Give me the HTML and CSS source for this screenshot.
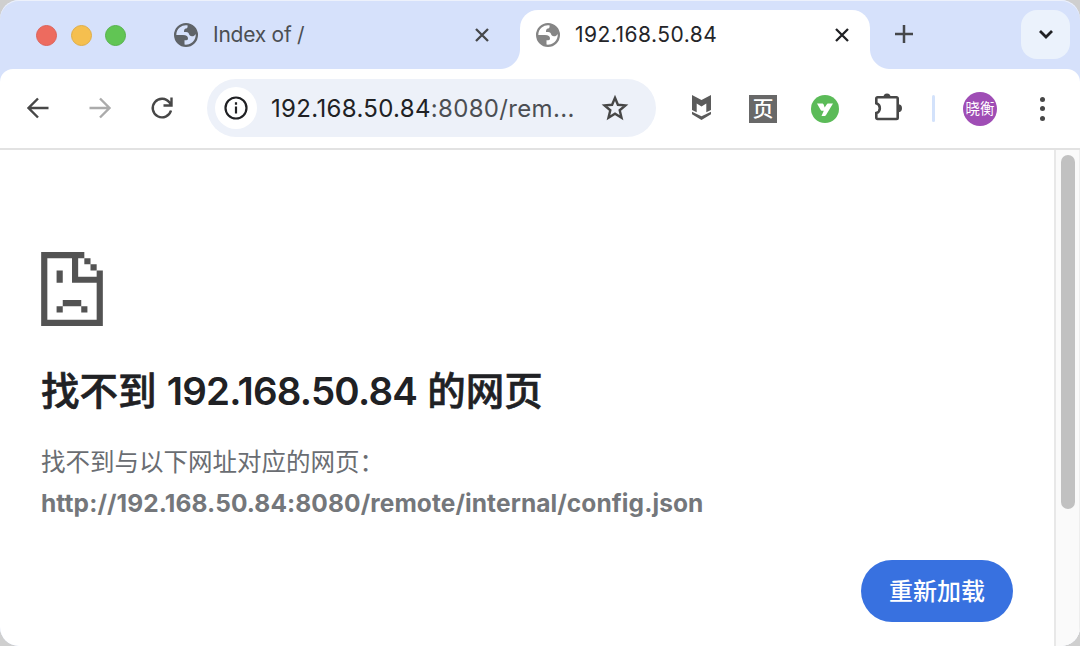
FILE: index.html
```html
<!DOCTYPE html>
<html lang="zh-CN">
<head>
    <meta charset="UTF-8">
    <title>192.168.50.84</title>
    <link rel="stylesheet" href="styles.css">
</head>
<body>
    <div class="window">
        <div class="tab-strip">
            <div class="lights">
                <span class="light red"></span>
                <span class="light yellow"></span>
                <span class="light green"></span>
            </div>
            <div class="tab">
                <svg class="globe" viewBox="0 0 24 24"><path fill="currentColor" fill-rule="evenodd" d="M12 0a12 12 0 1 0 0 24 12 12 0 0 0 0-24zM13.500 2.300A9.800 9.800 0 0 0 2.300 12H9c3.500 0 5 1.300 5 3.500 0 1.500-1 1.800-3.500 1.800v4.300A9.800 9.800 0 0 0 21.700 11c-1 1.700-2 2.300-3.700 2.300-2 0-2.500-1-3.200-2.800-.6-1.300-1.500-1.500-4.800-1.500 0-2.500.5-3.200 2-3.500 1.500-.2 1.800-1 1.500-3.200z"/></svg>
                <span class="tab-title">Index of /</span>
                <svg class="close" viewBox="0 0 14 14"><path d="M1 1l12 12M13 1L1 13"/></svg>
            </div>
            <div class="tab active">
                <svg class="globe" viewBox="0 0 24 24"><path fill="currentColor" fill-rule="evenodd" d="M12 0a12 12 0 1 0 0 24 12 12 0 0 0 0-24zM13.500 2.300A9.800 9.800 0 0 0 2.300 12H9c3.500 0 5 1.300 5 3.500 0 1.500-1 1.800-3.500 1.800v4.300A9.800 9.800 0 0 0 21.700 11c-1 1.700-2 2.300-3.700 2.300-2 0-2.500-1-3.200-2.800-.6-1.300-1.500-1.500-4.800-1.500 0-2.500.5-3.200 2-3.500 1.500-.2 1.800-1 1.500-3.200z"/></svg>
                <span class="tab-title">192.168.50.84</span>
                <svg class="close" viewBox="0 0 14 14"><path d="M1 1l12 12M13 1L1 13"/></svg>
            </div>
            <svg class="new-tab" viewBox="0 0 18 18"><path d="M9 0v18M0 9h18"/></svg>
            <div class="tab-search">
                <svg viewBox="0 0 14 9"><path d="M1 1l6 6 6-6"/></svg>
            </div>
        </div>

        <div class="toolbar">
            <svg class="nav-icon back" viewBox="0 0 22 22"><path d="M21.500 11H2M11 1.500L1.500 11l9.500 9.500"/></svg>
            <svg class="nav-icon forward" viewBox="0 0 22 22"><path d="M0.500 11h19.500M11 1.500l9.500 9.500-9.500 9.500"/></svg>
            <svg class="nav-icon reload" viewBox="0 0 22 22"><path d="M20 13.500A9.300 9.300 0 1 1 18.500 5.500L20 8M20.500 0.500v8H12.500"/></svg>
            <div class="address">
                <div class="site-info">
                    <svg viewBox="0 0 24 24"><circle cx="12" cy="12" r="10.500"/><path d="M12 10.500v7M12 6.200v2.500"/></svg>
                </div>
                <div class="url">192.168.50.84<span>:8080/rem...</span></div>
                <svg class="star" viewBox="0 0 26 26"><path d="M13 2.800l2.900 7 7.500.6-5.700 4.900 1.800 7.400-6.500-4-6.500 4 1.800-7.400-5.700-4.900 7.500-.6z"/></svg>
            </div>
            <div class="extensions">
                <svg class="shield" viewBox="0 0 19 25"><path d="M0 0l9.500 5L19 0v15l-4.700 2.200V8.500l-4.800 3-4.800-3v8.700L0 15z"/><path d="M0 16.800l9.500 4.400 9.500-4.400v2.400L9.500 25 0 19.200z"/></svg>
                <div class="page-ext">页</div>
                <svg class="green-ext" viewBox="0 0 28 28"><circle cx="14" cy="14" r="14" fill="#5bbb58"/><path fill="#fff" d="M6 8.500h5c1 0 1.500.5 1.800 1.500l.9 2.500 1.800-2.800c.5-.8 1-1.200 2-1.200H22l-6.800 11.300c-.5.800-1 1.200-2 1.200h-2.700l2.300-5.200h-1.500c-1 0-1.500-.3-1.900-1.200z"/></svg>
                <svg class="puzzle" viewBox="0 0 28 28"><path class="body" d="M3.500 4.300h19a1.200 1.200 0 0 1 1.200 1.200v19.300a1.200 1.200 0 0 1-1.200 1.200h-19a1.200 1.200 0 0 1-1.200-1.200V20C7 18.500 7 11.800 2.300 10.300V5.500a1.200 1.200 0 0 1 1.200-1.200z"/><path class="knob" d="M9.500 4a3.500 3.500 0 0 1 7 0zM24 11.200a4 4 0 0 1 0 8z"/></svg>
            </div>
            <span class="divider"></span>
            <div class="avatar">晓衡</div>
            <div class="menu"><i></i><i></i><i></i></div>
        </div>

        <div class="page">
            <div class="content">
                <svg class="sad-page" viewBox="0 0 10 12"><path d="M0 0h7v1H6v3h3V3h1v9H0zM1 1v10h8V5H5V1z"/><path d="M7 1h1v1h1v1H8V2H7zM2.500 3h1v2h-1zM3.500 7.800h3v1h-3zM2.500 8.800h1v1h-1zM6.500 8.800h1v1h-1z"/></svg>
                <h1>找不到 <span>192.168.50.84</span> 的网页</h1>
                <p class="summary">找不到与以下网址对应的网页：</p>
                <p class="failed-url">http://192.168.50.84:8080/remote/internal/config.json</p>
                <button class="reload-btn">重新加载</button>
            </div>
            <div class="scrollbar">
                <div class="thumb"></div>
            </div>
        </div>
    </div>
</body>
</html>
```
FILE: styles.css
```css
* {
    box-sizing: border-box;
}
body {
    margin: 0;
    background: #cfcfcf;
    font-family: Inter, 'Noto Sans CJK SC', sans-serif;
}
svg {
    display: block;
    flex: none;
    overflow: visible;
}
.window {
    width: 1080px;
    height: 646px;
    display: flex;
    flex-direction: column;
    overflow: hidden;
    border-radius: 19px;
    background: #d6e1fb;
    box-shadow: inset 0 1px 0 #edf1fb;
}

/* tab strip */
.tab-strip {
    height: 69px;
    display: flex;
    align-items: flex-start;
    padding-top: 10px;
}
.lights {
    display: flex;
    gap: 13.500px;
    margin: 15px 30px 0 36px;
}
.light {
    width: 21px;
    height: 21px;
    border-radius: 50%;
}
.red {
    background: #ed6b5f;
    border: 1px solid #dc6259;
}
.yellow {
    background: #f5bf4f;
    border: 1px solid #dfad48;
}
.green {
    background: #61c554;
    border: 1px solid #57b24c;
}
.tab {
    position: relative;
    width: 350px;
    height: 59px;
    display: flex;
    align-items: center;
    padding: 0 21px 10px 16px;
    color: #5f6368;
}
.tab:not(.active) {
    width: 364px;
    padding-left: 18px;
    padding-right: 31px;
}
.tab.active {
    border-radius: 18px 18px 0 0;
    background: #fff;
    color: #858585;
}
.tab.active::before,
.tab.active::after {
    content: "";
    position: absolute;
    bottom: 0;
    width: 20px;
    height: 20px;
}
.tab.active::before {
    left: -20px;
    background: radial-gradient(circle at 0 0, transparent 19.500px, #fff 20.500px);
}
.tab.active::after {
    right: -20px;
    background: radial-gradient(circle at 100% 0, transparent 19.500px, #fff 20.500px);
}
.globe {
    width: 24px;
    height: 24px;
}
.tab-title {
    flex: 1;
    margin-left: 15px;
    font-size: 21px;
    letter-spacing: -0.250px;
    white-space: nowrap;
    color: #4b4e53;
}
.active .tab-title {
    letter-spacing: 0.480px;
    color: #242529;
}
.close {
    width: 14px;
    height: 14px;
    fill: none;
    stroke: #45474a;
    stroke-width: 2.300;
}
.active .close {
    stroke: #202124;
}
.new-tab {
    width: 18px;
    height: 18px;
    margin: 15px 0 0 25px;
    stroke: #45474a;
    stroke-width: 2.500;
}
.tab-search {
    width: 49px;
    height: 49px;
    display: flex;
    align-items: center;
    justify-content: center;
    margin-left: auto;
    margin-right: 10px;
    border-radius: 16px;
    background: #ebf2fc;
}
.tab-search svg {
    width: 14px;
    height: 9px;
    fill: none;
    stroke: #202124;
    stroke-width: 2.800;
}

/* toolbar */
.toolbar {
    height: 81px;
    display: flex;
    align-items: center;
    padding: 0 35px 0 27px;
    border-bottom: 2px solid #e2e2e2;
    border-radius: 13px 13px 0 0;
    background: #fff;
}
.nav-icon {
    width: 22px;
    height: 22px;
    margin-top: -1px;
    fill: none;
    stroke: #474747;
    stroke-width: 2.400;
}
.forward {
    margin-left: 40px;
    stroke: #ababab;
}
.reload {
    margin-left: 40px;
}
.address {
    width: 449px;
    height: 58px;
    display: flex;
    align-items: center;
    margin-top: -1px;
    margin-left: 34px;
    padding: 0 28px 0 8px;
    border-radius: 29px;
    background: #edf1f9;
}
.site-info {
    width: 42px;
    height: 42px;
    display: flex;
    align-items: center;
    justify-content: center;
    border-radius: 50%;
    background: #fff;
}
.site-info svg {
    width: 24px;
    height: 24px;
    fill: none;
    stroke: #202124;
    stroke-width: 2.200;
}
.url {
    flex: 1;
    margin-left: 14px;
    font-size: 24px;
    letter-spacing: 0.330px;
    white-space: nowrap;
    color: #202124;
}
.url span {
    color: #4b4e53;
}
.star {
    width: 26px;
    height: 26px;
    fill: none;
    stroke: #474747;
    stroke-width: 2.400;
}
.extensions {
    display: flex;
    align-items: center;
    margin-left: 36px;
}
.shield {
    width: 19px;
    height: 25px;
    margin: -2px 1px 0 0;
    fill: #5b5b5b;
}
.page-ext {
    width: 28px;
    height: 28px;
    margin-left: 37px;
    background: #686868;
    color: #fff;
    font-size: 21px;
    font-weight: 500;
    line-height: 27px;
    text-align: center;
}
.green-ext {
    width: 28px;
    height: 28px;
    margin-left: 34px;
}
.puzzle {
    width: 28px;
    height: 28px;
    margin: -3px 0 0 35px;
}
.puzzle .body {
    fill: none;
    stroke: #474747;
    stroke-width: 2.600;
}
.puzzle .knob {
    fill: #474747;
}
.divider {
    width: 3px;
    height: 27px;
    margin-left: 30px;
    border-radius: 2px;
    background: #d3e2fb;
}
.avatar {
    width: 34px;
    height: 34px;
    margin-left: 28px;
    border-radius: 50%;
    background: #9f4db5;
    color: #fff;
    font-size: 14.500px;
    line-height: 34px;
    text-align: center;
    white-space: nowrap;
}
.menu {
    display: flex;
    flex-direction: column;
    gap: 4.500px;
    margin-left: auto;
}
.menu i {
    width: 5px;
    height: 5px;
    border-radius: 50%;
    background: #474747;
}

/* error page */
.page {
    flex: 1;
    display: flex;
    background: #fff;
}
.content {
    flex: 1;
    display: flex;
    flex-direction: column;
    padding: 102px 41px 0;
}
.sad-page {
    width: 62px;
    height: 74px;
    fill: #535353;
}
h1 {
    margin: 37px 0 0;
    font-size: 38.500px;
    font-weight: 500;
    line-height: 56px;
    white-space: nowrap;
    color: #202124;
    -webkit-text-stroke: 0.600px #202124;
}
h1 span {
    font-weight: 600;
    letter-spacing: -0.780px;
    -webkit-text-stroke: 0;
}
.summary {
    margin: 23px 0 0;
    font-size: 24.500px;
    line-height: 40px;
    color: #6a6d72;
}
.failed-url {
    margin: 0;
    font-size: 24.500px;
    font-weight: 700;
    letter-spacing: 0.090px;
    line-height: 42px;
    white-space: nowrap;
    color: #74777b;
}
.reload-btn {
    width: 152px;
    height: 62px;
    align-self: flex-end;
    margin-top: 36px;
    padding: 0 0 4px;
    border: 0;
    border-radius: 31px;
    background: #3871e0;
    color: #fff;
    font: 500 24px 'Noto Sans CJK SC', sans-serif;
}
.scrollbar {
    width: 26px;
    padding: 5px 0 0 5px;
    border-left: 2px solid #e8e8e8;
    border-right: 1px solid #eee;
    background: #fafafa;
}
.thumb {
    width: 14px;
    height: 354px;
    border-radius: 7px;
    background: #c1c1c1;
}
```
